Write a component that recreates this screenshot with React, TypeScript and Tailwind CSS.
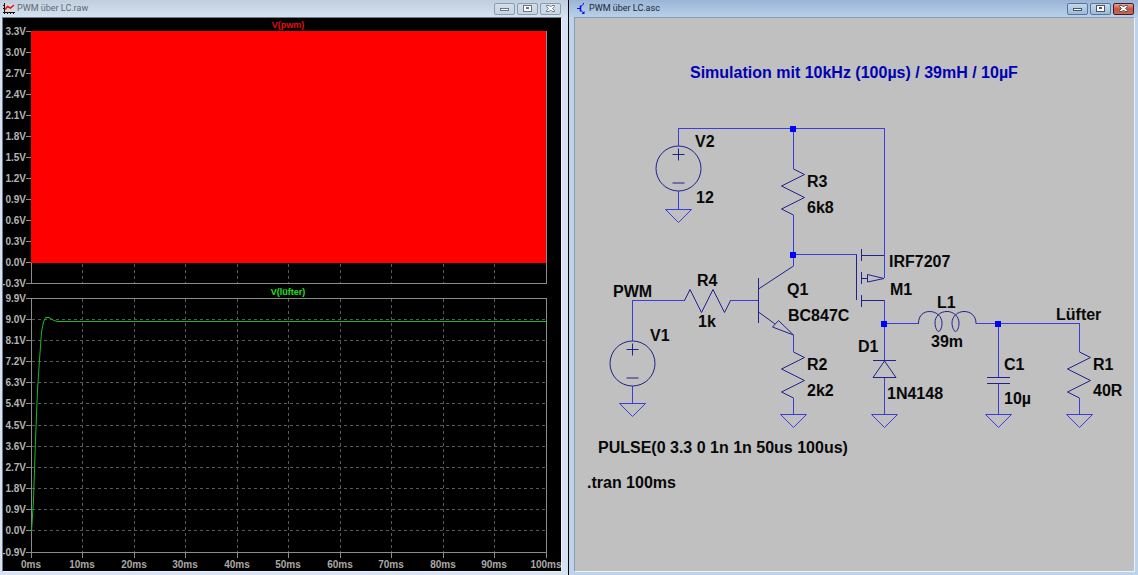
import clsx from "clsx";
import type { ReactNode } from "react";

type Label = { x: number; y: number; text: string };

const labels: Label[] = [
    { x: 695, y: 147, text: "V2" },
    { x: 696, y: 203, text: "12" },
    { x: 807, y: 187, text: "R3" },
    { x: 807, y: 213, text: "6k8" },
    { x: 697, y: 286, text: "R4" },
    { x: 698, y: 327, text: "1k" },
    { x: 613, y: 297, text: "PWM" },
    { x: 650, y: 341, text: "V1" },
    { x: 787, y: 295, text: "Q1" },
    { x: 788, y: 321, text: "BC847C" },
    { x: 807, y: 370, text: "R2" },
    { x: 807, y: 396, text: "2k2" },
    { x: 889, y: 267, text: "IRF7207" },
    { x: 890, y: 295, text: "M1" },
    { x: 937, y: 308, text: "L1" },
    { x: 931, y: 347, text: "39m" },
    { x: 858, y: 352, text: "D1" },
    { x: 887, y: 399, text: "1N4148" },
    { x: 1004, y: 370, text: "C1" },
    { x: 1004, y: 404, text: "10µ" },
    { x: 1056, y: 320, text: "Lüfter" },
    { x: 1093, y: 370, text: "R1" },
    { x: 1093, y: 396, text: "40R" },
    { x: 598, y: 453, text: "PULSE(0 3.3 0 1n 1n 50us 100us)" },
    { x: 587, y: 488, text: ".tran 100ms" },
];

const topAxis = ["3.3V", "3.0V", "2.7V", "2.4V", "2.1V", "1.8V", "1.5V", "1.2V", "0.9V", "0.6V", "0.3V", "0.0V", "-0.3V"];
const bottomAxis = ["9.9V", "9.0V", "8.1V", "7.2V", "6.3V", "5.4V", "4.5V", "3.6V", "2.7V", "1.8V", "0.9V", "0.0V", "-0.9V"];
const timeAxis = ["0ms", "10ms", "20ms", "30ms", "40ms", "50ms", "60ms", "70ms", "80ms", "90ms", "100ms"];

const topY = (i: number) => Math.floor(31 + i * 21.05) + 0.5;
const bottomY = (i: number) => Math.floor(298 + i * 21.17) + 0.5;
const timeX = (i: number) => Math.floor(31 + i * 51.5) + 0.5;

function WaveIcon() {
    return (
        <svg width="12" height="12" viewBox="0 0 12 12" fill="none" aria-hidden="true">
            <rect x="2" y="1" width="9" height="8" fill="#dcd3d6" />
            <path d="M1.5 0v11M0 9.5h12" stroke="#111" />
            <path d="M0 2.5h1M0 5.5h1M4.5 10v1M7.5 10v1M10.5 10v1" stroke="#111" />
            <path d="M2 6.5 4.5 3.5 7.5 5 11 2" stroke="#e11420" strokeWidth="1.5" />
        </svg>
    );
}

function TransistorIcon() {
    return (
        <svg width="10" height="12" viewBox="0 0 10 12" fill="none" stroke="#0a0af0" aria-hidden="true">
            <path d="M3.5 2.5v6" strokeWidth="1.5" />
            <path d="M0 5.5h3M3.5 4 6.5 1V0M3.5 7l3 3" />
            <path d="M7.5 8v3h-3z" fill="#0a0af0" stroke="none" />
        </svg>
    );
}

function TitleButton({ kind, active }: { kind: "min" | "max" | "close"; active?: boolean }) {
    const red = active && kind === "close";
    return (
        <button
            type="button"
            aria-label={kind}
            className={clsx(
                "flex h-3 w-[21px] items-center justify-center rounded-[2px] border",
                red
                    ? "border-[#4a1820] bg-linear-to-b from-[#e0a397] via-[#c8553f] to-[#c9694d]"
                    : active
                      ? "border-[#5a7596] bg-linear-to-b from-[#c3d7ed] to-[#9dbbdc]"
                      : "border-[#8b9bb0] bg-linear-to-b from-[#d3deeb] to-[#c5d4e5]"
            )}
        >
            <svg width="9" height="7" viewBox="0 0 9 7" fill="#fff" stroke={active ? "#4b5563" : "#6b7480"} aria-hidden="true">
                {kind === "min" && <rect x="0.5" y="3.5" width="8" height="2" />}
                {kind === "max" && (
                    <>
                        <rect x="0.5" y="0.5" width="8" height="6" />
                        <rect x="3.5" y="2.5" width="2" height="1" />
                    </>
                )}
                {kind === "close" && (
                    <path d="M.5.5h2.5L4.5 2 6 .5h2.5v1L6.5 3.5l2 2v1H6L4.5 5 3 6.5H.5v-1l2-2-2-2z" />
                )}
            </svg>
        </button>
    );
}

function Window({ title, icon, active, children }: { title: string; icon: ReactNode; active?: boolean; children: ReactNode }) {
    return (
        <section
            className={clsx(
                "flex min-w-0 flex-col pb-[3px]",
                active ? "bg-[#bdd3ec] pr-[3px] pl-[5px]" : "border-r border-black bg-[#d7e3f2] pr-[6px] pl-[2px]"
            )}
        >
            <header
                className={clsx(
                    "flex h-[17px] items-center gap-[2px] bg-linear-to-b",
                    active
                        ? "-mr-[3px] -ml-[5px] from-[#9ab5d5] to-[#b9d0ea] pr-1 pl-2"
                        : "-mr-[6px] -ml-[2px] from-[#c1cedd] to-[#d5e2f0] pr-[7px] pl-[3px]"
                )}
            >
                {icon}
                <h1 className={clsx("flex-1 font-[Roboto,sans-serif] text-[9px]", active ? "text-[#1c2634]" : "text-[#5d6876]")}>
                    {title}
                </h1>
                <div className="flex gap-[2px]">
                    <TitleButton kind="min" active={active} />
                    <TitleButton kind="max" active={active} />
                    <TitleButton kind="close" active={active} />
                </div>
            </header>
            <div
                className={clsx(
                    "flex-1 border border-r-[#eef3f9] border-b-[#eef3f9]",
                    active
                        ? "border-t-[#8e9bb0] border-l-[#8e9bb0] bg-[#c0c0c0]"
                        : "border-t-[#6f7a86] border-l-[#6f7a86] bg-black"
                )}
            >
                {children}
            </div>
        </section>
    );
}

function Plots() {
    return (
        <svg
            viewBox="3 18 558 553"
            className="block h-auto w-full font-['Liberation_Sans',Arial,sans-serif] text-[10px] font-bold"
            role="img"
            aria-label="Waveforms"
        >
            {/* Dashed grid */}
            <g stroke="#5a5a5a" strokeDasharray="3 3" shapeRendering="crispEdges">
                {timeAxis.slice(1, -1).map((t, i) => (
                    <path key={t} d={`M${timeX(i + 1)} 264V283M${timeX(i + 1)} 299V552`} />
                ))}
                {bottomAxis.slice(1, -1).map((v, i) => (
                    <path key={v} d={`M32 ${bottomY(i + 1)}H546`} />
                ))}
            </g>

            {/* Axis frames and ticks */}
            <g stroke="#8c8c8c" fill="none" shapeRendering="crispEdges">
                <path d="M31.5 31V283.5H546.5V31" />
                <path d="M31.5 298.5H546.5V552.5H31.5z" />
                {topAxis.map((v, i) => (
                    <path key={v} d={`M26 ${topY(i)}H31`} />
                ))}
                {bottomAxis.map((v, i) => (
                    <path key={v} d={`M26 ${bottomY(i)}H31`} />
                ))}
                {timeAxis.map((t, i) => (
                    <path key={t} d={`M${timeX(i)} 552V558`} />
                ))}
            </g>

            <g fill="#b4b4b4" textAnchor="end">
                {topAxis.map((v, i) => (
                    <text key={v} x="26" y={topY(i) + 3.5}>{v}</text>
                ))}
                {bottomAxis.map((v, i) => (
                    <text key={v} x="26" y={bottomY(i) + 3.5}>{v}</text>
                ))}
            </g>
            <g fill="#a8a8a8" textAnchor="middle">
                {timeAxis.map((t, i) => (
                    <text key={t} x={timeX(i) - 0.5} y="568">{t}</text>
                ))}
            </g>

            {/* Traces */}
            <rect x="31" y="31" width="515" height="232" fill="#ff0000" />
            <g fill="none" stroke="#18b828">
                <path d="M31.5 532 33.5 500 35.5 440 37.5 390 39.5 360 41.5 332 43.5 322 45.5 317.5H49L54 320.5 58 321.5" />
                <path d="M57 321.5H546" shapeRendering="crispEdges" />
            </g>
            <g textAnchor="middle" className="text-[9px]">
                <text x="288" y="28" fill="#e01010">V(pwm)</text>
                <text x="288" y="295" fill="#22e022">V(lüfter)</text>
            </g>
        </svg>
    );
}

function Resistor({ x, y, angle = 0 }: { x: number; y: number; angle?: number }) {
    return <path d="M0 0 11 5.5-12 17 11 28.5-12 40 0 46" transform={`translate(${x} ${y}) rotate(${angle})`} />;
}

function Source({ x, y }: { x: number; y: number }) {
    return (
        <g transform={`translate(${x} ${y})`}>
            <circle r="22.5" />
            <path d="M-6 -14H6M0 -20V-8M-6 14.5H6" />
        </g>
    );
}

function Ground({ x, y }: { x: number; y: number }) {
    return <path d="M-13 0H13L0 13z" transform={`translate(${x} ${y})`} />;
}

function Schematic() {
    return (
        <svg
            viewBox="575 18 559 553"
            className="block h-auto w-full font-['Liberation_Sans',Arial,sans-serif] text-[16px] font-bold"
            role="img"
            aria-label="Schematic"
        >
            {/* Wires */}
            <g stroke="#3c3cdc" fill="none">
                <g shapeRendering="crispEdges">
                    <path d="M678.5 146V128.5H884.5V278M793.5 128V169M793.5 215V266M793.5 254.5H856.5" />
                    <path d="M632.5 341V300.5H685M730 300.5H758M793.5 335V352M793.5 398V414" />
                    <path d="M678.5 191V209M632.5 386V403M884.5 300V361M884.5 378V414" />
                    <path d="M884 323.5H918.5M976 323.5H1079.5V352M1079.5 398V414M998.5 323V377M998.5 384V414" />
                </g>
                <Ground x={678.5} y={209.5} />
                <Ground x={632.5} y={403.5} />
                <Ground x={793.5} y={414.5} />
                <Ground x={884.5} y={414.5} />
                <Ground x={998.5} y={414.5} />
                <Ground x={1079.5} y={414.5} />
            </g>

            {/* Component symbols */}
            <g stroke="#20208f" fill="none">
                <Source x={678.5} y={168.5} />
                <Source x={632.5} y={363.5} />
                <Resistor x={793.5} y={169} />
                <Resistor x={793.5} y={352} />
                <Resistor x={1079.5} y={352} />
                <Resistor x={684.5} y={300.5} angle={-90} />
                {/* Q1 */}
                <path d="M758.5 278V323M758.5 289 793.5 266M758.5 312 775 324M778.5 320.5 772.5 327 793.5 335z" />
                {/* M1 */}
                <path d="M856.5 255V300M861.5 249V261M861.5 272V284M861.5 295V307M861 255.5H884M861 278.5H867.5M861 300.5H884M867.5 274.5V282L884 278.5z" />
                {/* D1 */}
                <path d="M873 360.5H896M884.5 361 896 377.5H873z" />
                {/* C1 */}
                <path d="M987 377.5H1010M987 383.5H1010" />
                {/* L1 */}
                <path d="M918.5 323.5C918.5 315 924 311.5 929.5 311.5 937 311.5 942 317 942 323 942 328 940 331.5 938.5 331.5 937 331.5 935 327 935 323 935 316 940 311.5 947 311.5 954 311.5 959 317 959 323 959 328 957 331.5 955.5 331.5 954 331.5 952 327 952 323 952 316 958 311.5 964 311.5 971 311.5 976 316 976 323.5" />
            </g>

            <g fill="#0000ff">
                <rect x="790" y="126" width="6" height="6" />
                <rect x="790" y="252" width="6" height="6" />
                <rect x="881" y="321" width="6" height="6" />
                <rect x="995" y="321" width="6" height="6" />
            </g>

            <text x="690" y="78" fill="#0000b4">Simulation mit 10kHz (100µs) / 39mH / 10µF</text>
            {labels.map((l) => (
                <text key={l.text} x={l.x} y={l.y} fill="#080808">{l.text}</text>
            ))}
        </svg>
    );
}

export default function App() {
    return (
        <main className="grid min-h-screen grid-cols-2">
            <Window title="PWM über LC.raw" icon={<WaveIcon />}>
                <Plots />
            </Window>
            <Window title="PWM über LC.asc" icon={<TransistorIcon />} active>
                <Schematic />
            </Window>
        </main>
    );
}
